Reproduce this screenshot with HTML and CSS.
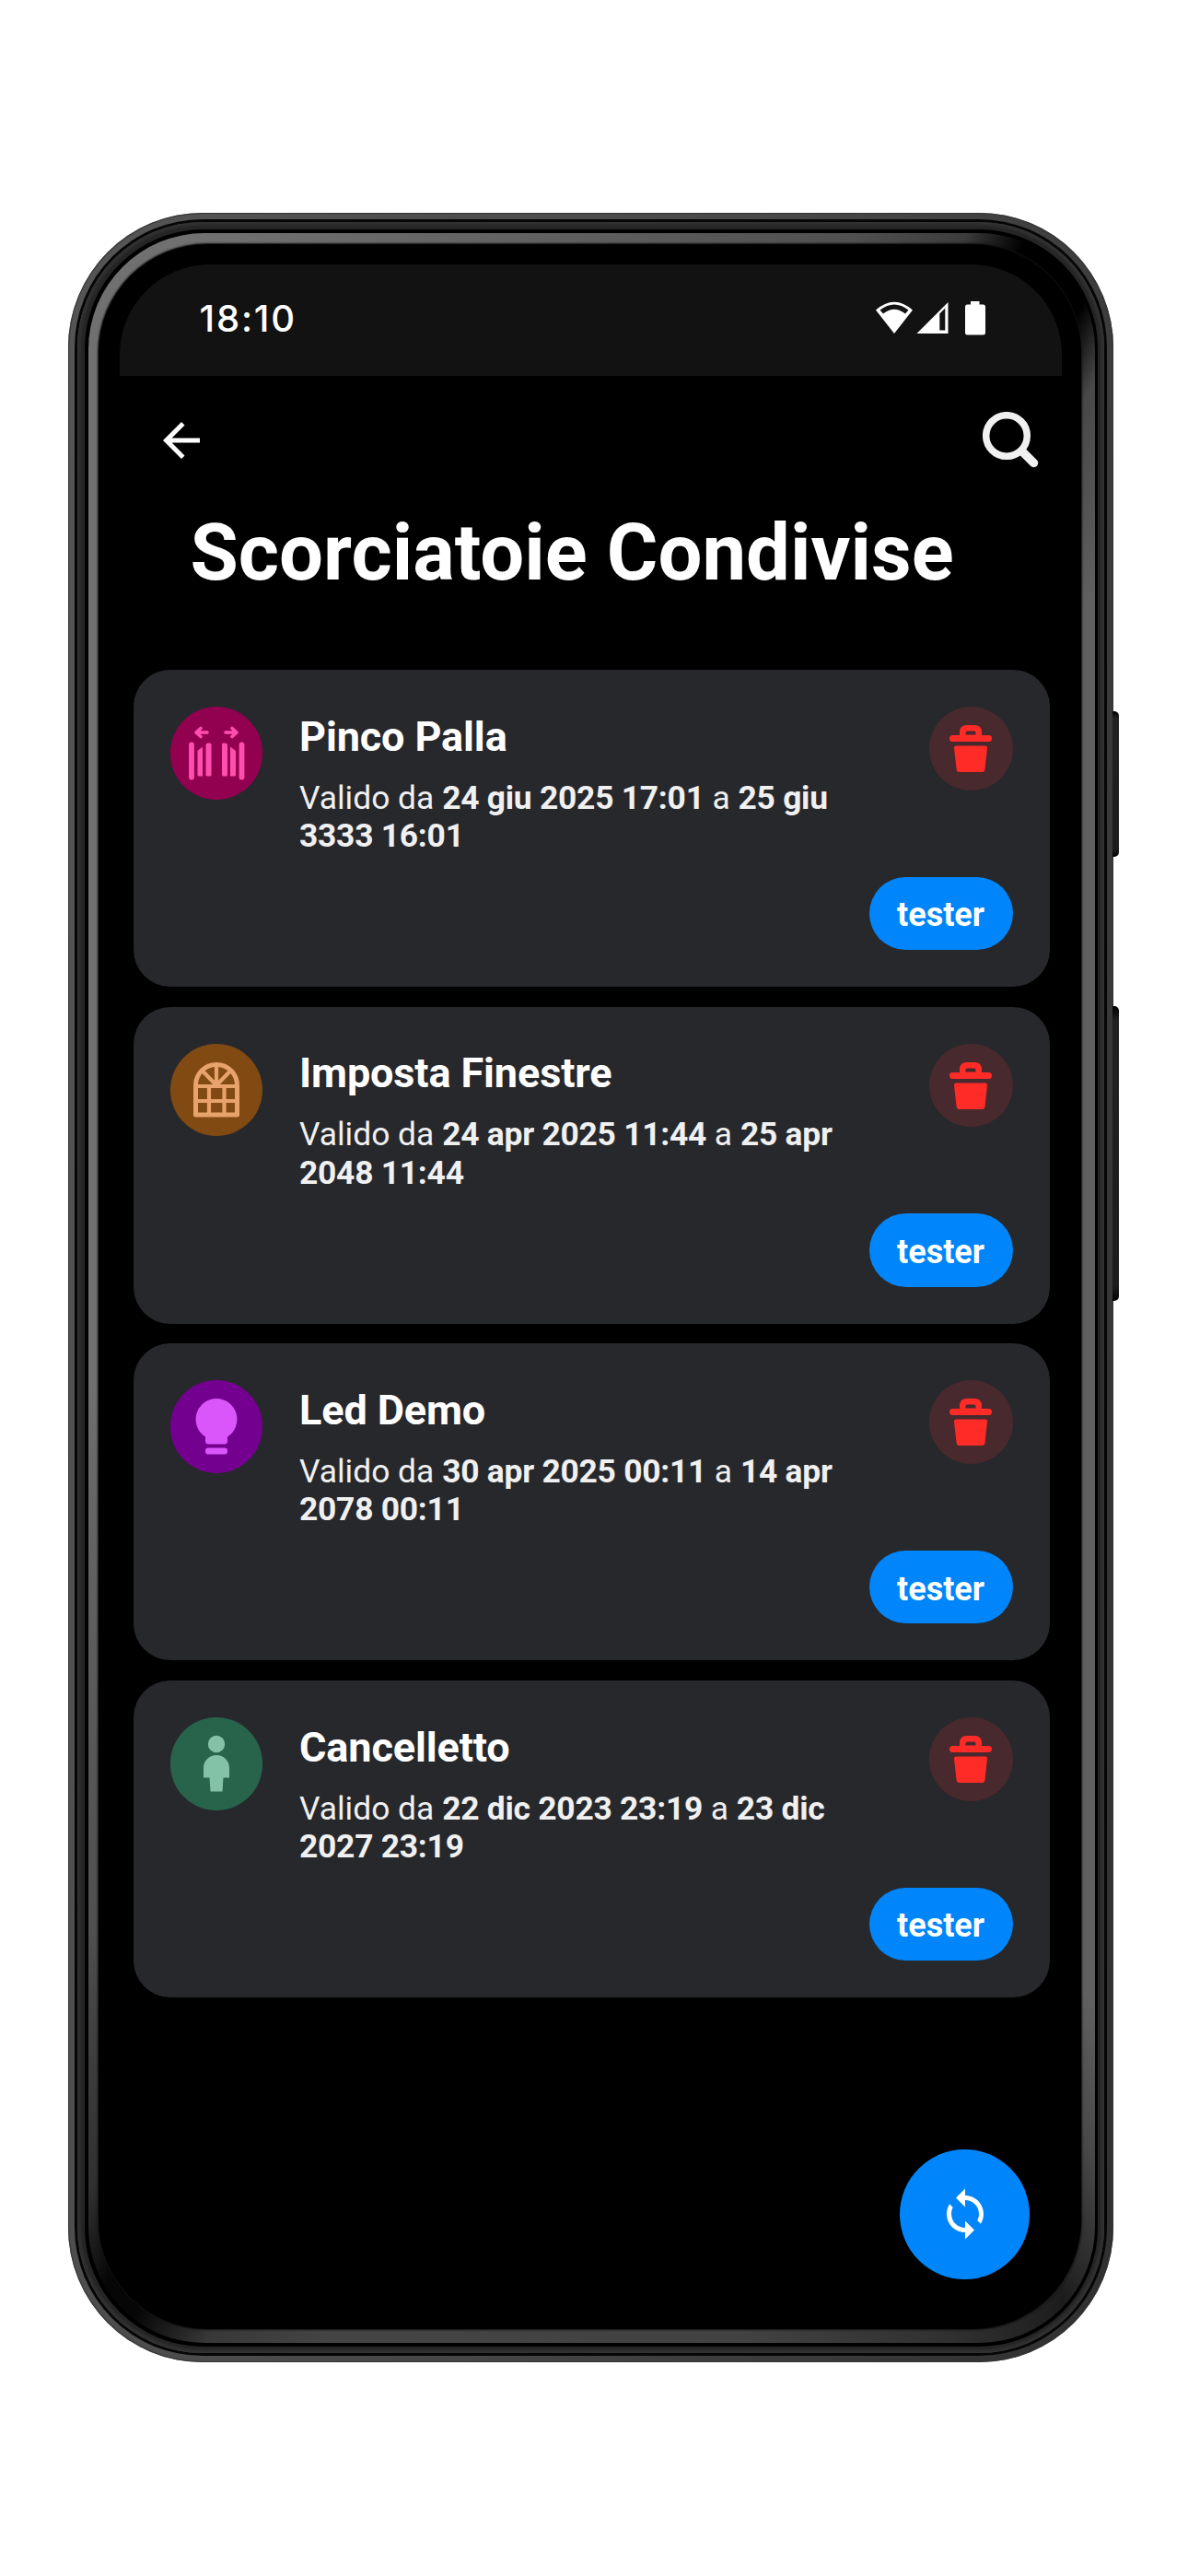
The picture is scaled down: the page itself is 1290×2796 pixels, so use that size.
FILE: index.html
```html
<!DOCTYPE html>
<html lang="it">
<head>
<meta charset="utf-8">
<title>Scorciatoie Condivise</title>
<link rel="stylesheet" href="styles.css">
</head>
<body>
<svg class="defs" aria-hidden="true">
  <symbol id="trash" viewBox="0 0 46 51">
    <path fill-rule="evenodd" d="M11 11V8Q11 0 19 0H27Q35 0 35 8V11H42.500Q46 11 46 14.500Q46 18 42.500 18H3.500Q0 18 0 14.500Q0 11 3.500 11ZM17.500 10.500H28.500V8.500Q28.500 6.500 26.500 6.500H19.500Q17.500 6.500 17.500 8.500Z"/>
    <path d="M7 22.500H39Q41.300 22.500 41 25L38.500 48Q38.200 51 35.500 51H10.500Q8 51 7.600 48L5 25Q4.800 22.500 7 22.500Z"/>
  </symbol>
</svg>
<div class="phone">
  <span class="side-key power"></span>
  <span class="side-key volume"></span>
  <div class="rim"><div class="band"><div class="groove"><div class="bevel"><div class="glass">
    <div class="statusbar">
      <span class="clock">18:10</span>
      <svg class="status-icons" width="120" height="38" viewBox="0 0 120 38" fill="#fff">
        <path fill-rule="evenodd" d="M0 9.500Q20 -8 40 9.500L20 35ZM4.500 9.500L8 13.500Q20 4 32 13.500L35.500 9.500Q20 -2.500 4.500 9.500Z"/>
        <path fill-rule="evenodd" d="M44.500 35L78.500 1V35ZM69.300 13.500V31.500H75.300V7.500Z"/>
        <path d="M103 0H112.500V3.500H116.500Q119 3.500 119 6V34Q119 36.500 116.500 36.500H99.500Q97 36.500 97 34V6Q97 3.500 99.500 3.500H103Z"/>
      </svg>
    </div>
    <header class="appbar">
      <svg width="60" height="60" viewBox="0 0 24 24" fill="#fff"><path d="M20 11H7.830l5.590-5.590L12 4l-8 8 8 8 1.410-1.410L7.830 13H20z"/></svg>
      <svg width="62" height="62" viewBox="0 0 62 62" fill="none" stroke="#f0f0f0"><circle cx="26" cy="26" r="22.300" stroke-width="7.500"/><path d="M43 43L55.500 55.500" stroke-width="9.500" stroke-linecap="round"/></svg>
    </header>
    <h1>Scorciatoie Condivise</h1>
    <main class="list">
      <article class="card">
        <span class="avatar gate"><svg viewBox="0 0 100 100" fill="none" stroke="#ff4fae" stroke-linecap="round" stroke-linejoin="round">
          <path stroke-width="3.600" d="M40 28H28M33 23.500L28 28L33 32.500M60 28H72M67 23.500L72 28L67 32.500"/>
          <path stroke-width="5.800" d="M23 41.500V76.500M77.500 41.500V76.500"/>
          <g fill="#ff4fae" stroke="none"><path d="M29.500 48L35 43.500V75.500H31Q29.500 75.500 29.500 74ZM71 48L65 43.500V75.500H69.500Q71 75.500 71 74Z"/><path d="M38.500 41.500Q38.700 39.500 41 39.500H43Q44.500 39.500 44.500 41V74Q44.500 75.500 43 75.500H40Q38.500 75.500 38.500 74ZM62 41.500Q61.800 39.500 59.500 39.500H57.500Q56 39.500 56 41V74Q56 75.500 57.500 75.500H60.500Q62 75.500 62 74Z"/></g>
        </svg></span>
        <div class="info"><h2>Pinco Palla</h2><p>Valido da <b>24 giu 2025 17:01</b> a <b>25 giu 3333 16:01</b></p></div>
        <div class="actions"><span class="delete"><svg width="46" height="51"><use href="#trash"/></svg></span><span class="tag">tester</span></div>
      </article>
      <article class="card">
        <span class="avatar window"><svg viewBox="0 0 100 100" fill="none" stroke="#e8a26c" stroke-width="4.200">
          <path stroke-width="5" stroke-linejoin="round" d="M27.500 45A22.500 22.500 0 0 1 72.500 45V77H27.500Z"/>
          <path d="M27 46H73M27 62H73M42 46V77M58.500 46V77M50 23V45M34.500 29L50 45L65.500 29"/>
        </svg></span>
        <div class="info"><h2>Imposta Finestre</h2><p>Valido da <b>24 apr 2025 11:44</b> a <b>25 apr 2048 11:44</b></p></div>
        <div class="actions"><span class="delete"><svg width="46" height="51"><use href="#trash"/></svg></span><span class="tag">tester</span></div>
      </article>
      <article class="card">
        <span class="avatar led"><svg viewBox="0 0 100 100" fill="#da56fa">
          <path d="M50 20A22.500 22.500 0 0 1 62 61.500V66Q62 69.500 58.500 69.500H41.500Q38 69.500 38 66V61.500A22.500 22.500 0 0 1 50 20Z"/><rect x="38" y="73.500" width="24" height="7" rx="3"/>
        </svg></span>
        <div class="info"><h2>Led Demo</h2><p>Valido da <b>30 apr 2025 00:11</b> a <b>14 apr 2078 00:11</b></p></div>
        <div class="actions"><span class="delete"><svg width="46" height="51"><use href="#trash"/></svg></span><span class="tag">tester</span></div>
      </article>
      <article class="card">
        <span class="avatar person"><svg viewBox="0 0 100 100" fill="#84c2a8">
          <circle cx="50" cy="29" r="9.200"/><path d="M36 65.500V55A14 14 0 0 1 64 55V65.500H57.500L56.500 80.500H43.500L42.500 65.500Z"/>
        </svg></span>
        <div class="info"><h2>Cancelletto</h2><p>Valido da <b>22 dic 2023 23:19</b> a <b>23 dic 2027 23:19</b></p></div>
        <div class="actions"><span class="delete"><svg width="46" height="51"><use href="#trash"/></svg></span><span class="tag">tester</span></div>
      </article>
    </main>
    <div class="fab"><svg width="60" height="60" viewBox="0 0 24 24" fill="#fff"><path transform="matrix(-1 0 0 1 24 0)" d="M12 4V1L16 5 12 9V6c-3.310 0-6 2.690-6 6 0 1.010.25 1.970.7 2.800L5.240 16.260C4.460 15.030 4 13.570 4 12c0-4.420 3.580-8 8-8zm0 14c3.310 0 6-2.690 6-6 0-1.010-.25-1.970-.7-2.800l1.460-1.460C19.540 8.970 20 10.430 20 12c0 4.420-3.580 8-8 8v3l-4-4 4-4v3z"/></svg></div>
  </div></div></div></div></div>
</div>
</body>
</html>
```
FILE: styles.css
```css
* { box-sizing: border-box; }
body { margin: 0; background: #fff; font-family: Roboto, "Liberation Sans", sans-serif; color: #fff; }
.defs { position: absolute; width: 0; height: 0; }

/* device shell, outermost layer first */
.phone { position: relative; width: 1134.500px; height: 2333px; margin: 231px 0 0 74px; padding: 7px 6.500px 7px 7px; border-radius: 146px; background: linear-gradient(100deg, #555 0%, #484848 50%, #303030 100%); box-shadow: inset 0 0 1px 1px #333; }
.rim { height: 100%; padding: 3px; border-radius: 139px; background: #060606; }
.band { height: 100%; padding: 8px 7px 7px 8px; border-radius: 136px; background: #252525; box-shadow: inset 0 0 2px 1px #363636, inset 0 0 0 4px #2d2d2d; }
.groove { height: 100%; padding: 3.500px 3px 4px 4px; border-radius: 129px; background: #000; }
.bevel { height: 100%; padding: 12px 15px 15px 11px; border-radius: 126px; background: conic-gradient(#5e5e5e 0deg, #505050 14deg, #3c3c3c 19.500deg, #000 22.500deg, #000 26.500deg, #484848 29deg, #606060 36deg, #606060 145deg, #484848 150deg, #1c1c1c 155deg, #303030 161deg, #424242 172deg, #444 194deg, #383838 200deg, #060606 204deg, #060606 206deg, #303030 209deg, #505050 218deg, #707070 260deg, #707070 340deg, #5e5e5e 360deg); }
.glass { display: flex; flex-direction: column; height: 100%; padding: 22.500px 21px 0 22.500px; border-radius: 118px; background: #000; box-shadow: 0 0 2px 1px #111; }
.side-key { position: absolute; left: 1134px; width: 7px; border-radius: 0 5px 5px 0; background: linear-gradient(#000, #222 5%, #1c1c1c 95%, #000); }
.power { top: 540.500px; height: 158.500px; }
.volume { top: 861px; height: 320px; }

.statusbar { display: flex; flex: none; justify-content: space-between; height: 120.500px; padding: 40px 82px 0 87px; border-radius: 98px 98px 0 0; background: #121212; }
.clock { font: 500 40px/38px Inter, sans-serif; letter-spacing: 1.800px; }
.appbar { display: flex; flex: none; justify-content: space-between; padding: 39.200px 24px 0 37px; height: 103px; }
.appbar svg:first-child { margin-top: 1px; }
h1 { flex: none; margin: 0; padding: 42px 0 0 77px; height: 216.600px; font-size: 85px; line-height: 94px; font-weight: 700; white-space: nowrap; }
.list { display: flex; flex: none; flex-direction: column; gap: 21.700px; width: 995px; margin-left: 15px; }
.card { display: flex; height: 344px; padding: 40px; border-radius: 40px; background: #27282c; }
.avatar { flex: none; width: 100.500px; height: 100.500px; border-radius: 50%; }
.avatar svg { display: block; width: 100px; height: 100px; }
.gate { background: #920050; }
.window { background: #814a12; }
.led { background: #73008f; }
.person { background: #28644b; }
.info { flex: 1; padding: 5.500px 0 0 40px; }
h2 { margin: 0; font-size: 45px; line-height: 54px; font-weight: 700; letter-spacing: -0.120px; white-space: nowrap; }
p { width: 610px; margin: 19px 0 0; font-size: 35.400px; line-height: 41.300px; font-weight: 400; color: #f0f0f0; }
p b { letter-spacing: -0.250px; }
.actions { display: flex; flex: none; flex-direction: column; align-items: flex-end; gap: 94px; margin-left: -60px; }
.delete { display: flex; align-items: center; justify-content: center; width: 91px; height: 91px; border-radius: 50%; background: #48292d; }
.delete svg { fill: #ff2b27; }
.tag { display: flex; align-items: center; justify-content: center; width: 156px; height: 80px; padding-top: 4px; border-radius: 40px; background: #0086fa; font-size: 36px; font-weight: 700; }
.fab { display: flex; flex: none; align-items: center; justify-content: center; align-self: flex-end; width: 141px; height: 141px; margin: 164.700px 35px 0 0; border-radius: 50%; background: #0086fa; }
```
